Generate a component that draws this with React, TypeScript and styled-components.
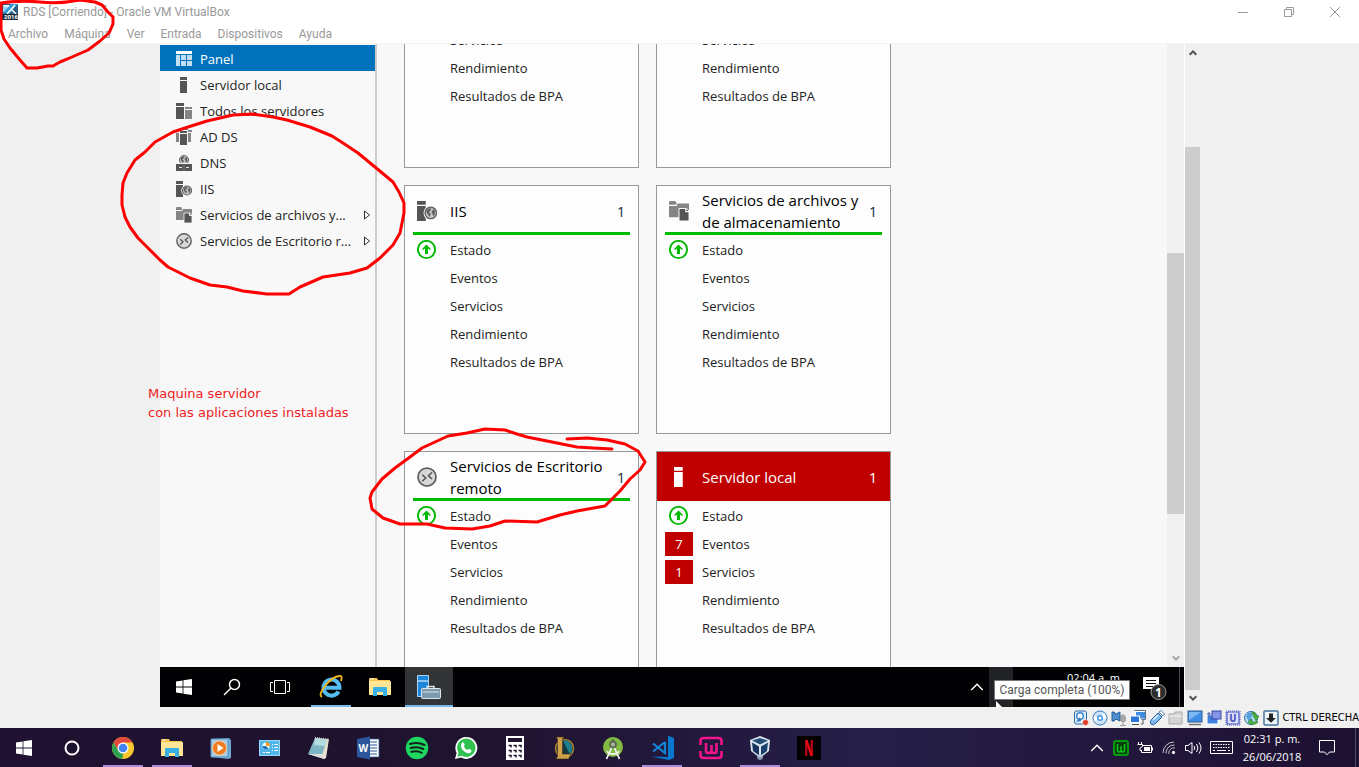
import React from "react";
import styled, { createGlobalStyle, css } from "styled-components";

const GlobalStyle = createGlobalStyle`
  * { box-sizing: border-box; }
  body { margin: 0; overflow: hidden; font-family: "Open Sans", "Noto Sans", sans-serif; font-size: 13px; color: #222; }
  button { font: inherit; color: inherit; border: 0; padding: 0; background: none; }
  h2, ul, p { margin: 0; padding: 0; font-weight: 400; }
  ul { list-style: none; }
  svg { display: block; flex: none; }
`;

/* ---------- Window frame ---------- */
const Desktop = styled.div`
  position: relative;
  display: flex;
  flex-direction: column;
  height: 100vh;
  background: #f0f0f0;
`;
const TitleBar = styled.header`
  display: flex;
  align-items: center;
  height: 24px;
  padding: 0 1px 0 2px;
  background: #fff;
  color: #999;
  font-family: Roboto, sans-serif;
  font-size: 12px;
`;
const WindowTitle = styled.span`
  flex: 1;
  margin-left: 5px;
`;
const WindowButton = styled.button`
  display: grid;
  place-items: center;
  width: 46px;
  height: 20px;
`;
const MenuBar = styled.nav`
  display: flex;
  align-items: center;
  gap: 16px;
  height: 19px;
  padding-left: 8px;
  background: #fff;
  color: #999;
  font-family: Roboto, sans-serif;
  font-size: 12px;
`;
const Workspace = styled.main`
  flex: 1;
  min-height: 0;
  display: grid;
  grid-template-columns: 160px minmax(0, 1fr) 16px 159px;
  grid-template-rows: minmax(0, 1fr);
  border-top: 1px solid #f4f4f4;
`;
const Guest = styled.section`
  grid-column: 2;
  display: flex;
  flex-direction: column;
  min-height: 0;
`;
const GuestScreen = styled.div`
  flex: 1;
  min-height: 0;
  display: flex;
  overflow: hidden;
  background: #f8f8f8;
`;
const ScrollTrack = styled.div<{ $before: number; $thumb: number; $after: number; $outer?: boolean }>`
  display: grid;
  grid-template-rows: ${(p) => `minmax(0, ${p.$before}fr) minmax(0, ${p.$thumb}fr) minmax(0, ${p.$after}fr)`};
  width: ${(p) => (p.$outer ? 16 : 17)}px;
  justify-items: center;
  background: #f0f0f0;
  border-left: ${(p) => (p.$outer ? "1px solid #fff" : "0")};
`;
const ScrollThumb = styled.div`
  width: 100%;
  background: #cdcdcd;
`;
const ScrollEnd = styled.span<{ $end?: boolean }>`
  align-self: ${(p) => (p.$end ? "end" : "start")};
  padding: 5px 0;
`;

/* ---------- Sidebar ---------- */
const Sidebar = styled.nav`
  width: 217px;
  padding-top: 1px;
  border-right: 2px solid #ccc;
`;
const NavItem = styled.a<{ $active?: boolean }>`
  display: flex;
  align-items: center;
  gap: 8px;
  height: 26px;
  padding: 1px 4px 0 16px;
  color: #222;
  font-size: 13px;
  text-decoration: none;
  white-space: nowrap;
  ${(p) => p.$active && css`background: #0072bc; color: #fff;`}
`;
const NavLabel = styled.span`
  flex: 1;
`;

/* ---------- Cards ---------- */
const Dashboard = styled.div`
  flex: 1;
  overflow: hidden;
`;
const CardGrid = styled.div`
  display: grid;
  grid-template-columns: repeat(2, 235px);
  grid-template-rows: 143px;
  grid-auto-rows: 249px;
  gap: 17px;
  margin: -19px 0 0 27px;
`;
const Card = styled.article`
  border: 1px solid #999;
  background: #fdfdfd;
`;
const CardHeader = styled.header<{ $alert?: boolean }>`
  display: grid;
  grid-template-columns: 28px minmax(0, 1fr) 18px;
  column-gap: 9px;
  align-items: center;
  height: 49px;
  margin: 0 8px 1px;
  color: #000;
  box-shadow: inset 0 -3px #00bc00;
  ${(p) => p.$alert && css`margin: 0 0 1px; padding: 0 8px; background: #c00000; color: #fff; box-shadow: none;`}
`;
const CardTitle = styled.h2`
  font-size: 15px;
  line-height: 22px;
  white-space: nowrap;
`;
const Count = styled.span<{ $alert?: boolean }>`
  color: ${(p) => (p.$alert ? "#fff" : "#16324a")};
  font-size: 15px;
  text-align: center;
`;
const IconSlot = styled.span`
  display: grid;
  place-items: center;
`;
const Row = styled.li`
  display: grid;
  grid-template-columns: 28px 1fr;
  column-gap: 9px;
  align-items: center;
  height: 28px;
  margin-left: 8px;
  font-size: 13px;
`;
const Badge = styled.span`
  display: grid;
  place-items: center;
  width: 28px;
  height: 24px;
  background: #c00000;
  color: #fff;
  font-size: 13px;
`;

/* ---------- Taskbars ---------- */
const GuestTaskbar = styled.footer`
  position: relative;
  display: flex;
  height: 40px;
  background: #010104;
  color: #fff;
`;
const Spacer = styled.span<{ $width?: number }>`
  flex: ${(p) => (p.$width ? `0 0 ${p.$width}px` : "1")};
`;
const Pinned = styled.div`
  display: flex;
  gap: 1px;
  margin-left: 3px;
`;
const TaskButton = styled.button<{ $line?: string; $active?: boolean }>`
  position: relative;
  display: grid;
  place-items: center;
  width: 48px;
  height: 100%;
  background: ${(p) => (p.$active ? "#333436" : "transparent")};
  ${(p) => p.$line && css`
    &::after {
      content: "";
      position: absolute;
      bottom: 0;
      left: ${p.$active ? 0 : 4}px;
      right: ${p.$active ? 0 : 4}px;
      height: 2px;
      background: ${p.$line};
    }
  `}
`;
const TrayButton = styled.button<{ $width: number; $lit?: boolean }>`
  display: grid;
  place-items: center;
  width: ${(p) => p.$width}px;
  height: 100%;
  background: ${(p) => (p.$lit ? "#222326" : "transparent")};
`;
const Clock = styled.time<{ $width: number }>`
  display: flex;
  flex-direction: column;
  align-items: center;
  justify-content: center;
  width: ${(p) => p.$width}px;
  font-size: 11px;
  line-height: 18px;
  white-space: nowrap;
`;
const ShowDesktop = styled.button<{ $width: number }>`
  width: ${(p) => p.$width}px;
  border-left: 1px solid #4c4a5c;
`;
const Tooltip = styled.div`
  position: absolute;
  right: 54px;
  top: 13px;
  width: 136px;
  height: 20px;
  border: 1px solid #767676;
  background: #fff;
  color: #555;
  font-family: Roboto, sans-serif;
  font-size: 12px;
  line-height: 18px;
  text-align: center;
  white-space: nowrap;
`;
const Pointer = styled.svg`
  position: absolute;
  right: 180px;
  top: 34px;
`;
const StatusBar = styled.footer`
  display: flex;
  align-items: center;
  justify-content: flex-end;
  gap: 3px;
  height: 21px;
  color: #000;
  font-family: "DejaVu Sans Condensed", "Liberation Sans", sans-serif;
  font-size: 11px;
  white-space: nowrap;
`;
const HostTaskbar = styled.footer`
  display: flex;
  height: 39px;
  background: linear-gradient(90deg, #1f1231 0%, #20132f 35%, #231a40 55%, #252049 64%, #24193f 78%, #1c1131 100%);
  color: #fff;
`;

/* ---------- Hand-drawn notes ---------- */
const Ink = styled.svg`
  position: absolute;
  inset: 0;
  width: 100%;
  height: 100%;
  pointer-events: none;
  fill: none;
  stroke: #fe0000;
  stroke-width: 3;
  stroke-linejoin: round;
  stroke-linecap: round;
`;
const Note = styled.p`
  position: absolute;
  left: 148px;
  top: 384px;
  color: #ee1c24;
  font-family: "DejaVu Sans", sans-serif;
  font-size: 13px;
  line-height: 19px;
`;

/* ---------- Icons ---------- */
const Chevron = ({ down, color = "#505050", w = 8 }: { down?: boolean; color?: string; w?: number }) => (
  <svg width={w} height={w} viewBox="0 0 8 8" fill="none" stroke={color} strokeWidth={w > 10 ? 0.8 : 2}>
    <path d={down ? "M.7 2.3 4 5.6 7.3 2.3" : "M.7 5.7 4 2.4 7.3 5.7"} />
  </svg>
);

const Globe = ({ x, y, r }: { x: number; y: number; r: number }) => (
  <g transform={`translate(${x} ${y}) scale(${r / 5})`}>
    <circle r="5" fill="#c4c4c4" stroke="#5c5c5c" strokeWidth="1.1" />
    <path d="M-3.9-1.6-2.2-3.6-.2-4 .6-2.8-.6-2-1-1-2-.6-1.2.2 0 .8-.4 2-1.4 3.6-2 1.6-3.4.4ZM1.6-3.4 3.2-2.6 4-1 3-.8 3.8.6 2.6 2.8 1.6 1.8 1.8.6.8-.4 1-1.6 2-2Z" fill="#5c5c5c" />
  </g>
);

type Kind = "panel" | "server" | "servers" | "adds" | "dns" | "iis" | "files" | "rds";
const RoleIcon = ({ kind, size = 16, color = "#555" }: { kind: Kind; size?: number; color?: string }) => (
  <svg width={size} height={size} viewBox="0 0 16 16">
    {kind === "panel" && (
      <>
        <path d="M0 0h16v3H0Z" fill="#fff" />
        <path d="M0 4h4v11H0ZM5 4h5v5H5ZM11 4h5v5h-5ZM5 10h5v5H5ZM11 10h5v5h-5Z" fill="#c4dff1" />
      </>
    )}
    {kind === "server" && <path d="M4 0h7v3H4ZM4 4h7v12H4Z" fill={color} />}
    {kind === "servers" && (
      <>
        <path d="M0 0h8v3H0ZM0 4h8v12H0Z" fill="#555" />
        <path d="M9 4h7v2H9ZM9 7h7v9H9Z" fill="#858585" />
      </>
    )}
    {kind === "adds" && (
      <>
        <path d="M0 1h3v2H0ZM0 4h3v9H0ZM12 1h4v2h-4ZM12 4h3v9h-3ZM5 0h7v1H5Z" fill="#858585" />
        <path d="M4 2h7v2H4ZM4 5h7v11H4Z" fill="#555" />
      </>
    )}
    {kind === "dns" && (
      <>
        <Globe x={8} y={5} r={4.5} />
        <path d="M0 9h16v7H0Z" fill="#555" />
        <path d="M0 8.500h16" stroke="#f8f8f8" />
        <path d="M3 12.500h3M10 12.500h3" stroke="#e8e8e8" />
        <path d="M8 10v6" stroke="#999" strokeWidth=".5" />
      </>
    )}
    {kind === "iis" && (
      <>
        <path d="M0 0h7v3H0ZM0 4h7v12H0Z" fill="#555" />
        <circle cx="11" cy="9.5" r="5.8" fill="#fafafa" />
        <Globe x={11} y={9.5} r={4.6} />
      </>
    )}
    {kind === "files" && (
      <>
        <path d="M0 1q0-1 1-1h4l1 1.5V3H0ZM0 4h6l1-2h9v11H0Z" fill="#858585" />
        <path d="M8 6h6l2 2v8H8Z" fill="#555" stroke="#fafafa" strokeWidth=".8" />
        <path d="M13.5 6v2.5H16" fill="none" stroke="#fafafa" />
      </>
    )}
    {kind === "rds" && (
      <>
        <circle cx="8" cy="8" r="7.2" fill="#d8d8d8" stroke="#606060" strokeWidth="1.4" />
        <path d="m4.2 6.2 2.8 2.6-2.8 2.6M12 4.400 9.200 7l2.800 2.600" fill="none" stroke="#555" strokeWidth="1.3" />
      </>
    )}
  </svg>
);

const UpIcon = () => (
  <svg width="20" height="20" viewBox="0 0 20 20">
    <circle cx="9.5" cy="9.500" r="8.600" fill="#fff" stroke="#00b900" strokeWidth="1.900" />
    <path d="m9.500 4.500 4 4v1.800L11 8.600V14H8V8.600l-2.500 1.700V8.500Z" fill="#00b900" />
  </svg>
);

const WindowsLogo = () => (
  <svg width="16" height="16" viewBox="0 0 16 16" fill="#fff">
    <path d="M0 2.4 6.6 1.4v6.1H0ZM7.4 1.2 16 0v7.5H7.4ZM0 8.4h6.6v6.2L0 13.6ZM7.4 8.4H16V16l-8.6-1.3Z" />
  </svg>
);
const FolderIcon = () => (
  <svg width="22" height="20" viewBox="0 0 22 20">
    <path d="M0 2q0-1 1-1h7l1 2h12v15H0Z" fill="#f3c64e" />
    <path d="M1 4h20q1 0 1 1v13H0V5q0-1 1-1Z" fill="#ffe595" />
    <path d="M1.5 2h3" stroke="#fff" />
    <path d="M4 19v-8q0-1 1-1h12q1 0 1 1v8h-4v-4H8v4Z" fill="#38b0e6" />
  </svg>
);

const StatusIcon = ({ kind }: { kind: number }) => (
  <svg width="16" height="16" viewBox="0 0 16 16">
    {kind === 0 && (<>
      <rect x="1.5" y="1" width="12" height="13" rx="2" fill="#dceefb" stroke="#2c6cab" />
      <circle cx="7" cy="6" r="3.3" fill="#fff" stroke="#3d8ad1" strokeWidth="1.5" /><path d="m7 7-4 5 5-1Z" fill="#2f77c2" />
      <circle cx="12.5" cy="12.5" r="3" fill="#e03a26" stroke="#fff" strokeWidth=".6" />
    </>)}
    {kind === 1 && (<>
      <circle cx="8" cy="8" r="7" fill="#cce5fa" stroke="#3a79ba" />
      <path d="m8 8 4-5q3 3 2 6ZM8 8 3 12q-2-3-1-6Z" fill="#fff" /><circle cx="8" cy="8" r="2.3" fill="#fff" stroke="#4a97dd" strokeWidth="1.5" />
    </>)}
    {kind === 2 && (<>
      <path d="M1 2h2l2 2 4-2v9L5 9l-2 2H1Z" fill="#4d8fce" stroke="#245a92" />
      <rect x="10" y="5" width="4" height="7" rx="2" fill="#bbb" stroke="#8b8b8b" /><path d="M9 8h6M9 10h6M12 13v2.500M9 15.500h6" stroke="#999" />
    </>)}
    {kind === 3 && (<>
      <rect x="5.500" y="1.500" width="10" height="7.500" fill="#3e8de0" stroke="#fff" /><path d="M4.500.5h11v9h-4" fill="none" stroke="#5c6f85" />
      <rect x=".5" y="6" width="9" height="6.500" fill="#2972d8" stroke="#fff" /><path d="M2 14.500h7M13 10v4h-2" stroke="#555" fill="none" />
    </>)}
    {kind === 4 && (<>
      <path d="m3 9 6-6 4 4-6 6q-3 3-5 1t1-5Z" fill="#80b9ef" stroke="#245f9f" /><path d="m10 2 2-1.500 3.500 3.500L14 6Z" fill="#fff" stroke="#4a7dab" /><path d="m4 10 5-5" stroke="#e8f5ff" strokeWidth="1.500" />
    </>)}
    {kind === 5 && (<>
      <path d="M1 14V4h5l1-2h7v12Z" fill="#d4d4d4" stroke="#a9a9a9" /><path d="M1 6h13" stroke="#f4f4f4" />
    </>)}
    {kind === 6 && (<>
      <rect x="1" y="1" width="14" height="11" fill="#3f8ee4" stroke="#2e5d92" /><path d="M2 2h12L2 10Z" fill="#7fb9f4" /><path d="M2 14.500h12" stroke="#777" strokeWidth="1.500" />
    </>)}
    {kind === 7 && (<>
      <rect x="1" y="5" width="11" height="9" fill="#3f83df" stroke="#fff" /><rect x="6" y="1" width="9" height="8" fill="#8595e8" stroke="#3446aa" /><path d="M3 2v5M1 4h4" stroke="#4552a8" />
    </>)}
    {kind === 8 && (<>
      <rect x="2" y="2" width="12" height="12" rx="1" fill="#dde1fb" stroke="#4a56be" strokeWidth="1.200" /><rect x="1" y="1" width="14" height="14" fill="none" stroke="#4a56be" strokeDasharray="1 1" />
      <text x="8" y="12" fontSize="10" fontWeight="700" textAnchor="middle" fill="#4a56be">U</text>
    </>)}
    {kind === 9 && (<>
      <circle cx="7" cy="8" r="6.500" fill="#b9ddf4" stroke="#2f6da8" /><path d="m2 6 3-4 4 2-2 4 2 4-3 2Z" fill="#55a1da" />
      <path d="M8 2q4 0 4.500 4H15l-3 4.500L9 6h1.500Q10 4 8 4ZM7 14q5 1 7-2l-2-1q-2 2-4 1V9l-4 3 3 3Z" fill="#4fbd3a" stroke="#20722c" strokeWidth=".6" />
    </>)}
    {kind === 10 && (<>
      <rect x="1" y="1" width="14" height="14" rx="1" fill="#edf5fb" stroke="#44739e" strokeWidth="1.500" /><path d="M6 3.500h4V8h3L8 12.800 3 8h3Z" fill="#222" />
    </>)}
  </svg>
);

const HostIcon = ({ name }: { name: string }) => (
  <svg width="24" height="24" viewBox="0 0 24 24">
    {name === "Chrome" && (<>
      <circle cx="12" cy="12" r="11" fill="#f8c92c" />
      <path d="M2.500 6.500A11 11 0 0 1 21.500 6.500H12L7.200 14.700Z" fill="#e2483b" />
      <path d="M2.500 6.500 7.300 14.700 12 17.300 11.500 23A11 11 0 0 1 2.500 6.500Z" fill="#2fa24f" />
      <circle cx="12" cy="12" r="5.500" fill="#fff" /><circle cx="12" cy="12" r="4.300" fill="#4284f3" />
    </>)}
    {name === "Media Player" && (<>
      <path d="M2 3 20 2l2 2v18l-3 1-17-2Z" fill="#6faad2" /><path d="M2 3h17v18H2Z" fill="#a8cfe8" stroke="#5791ba" />
      <circle cx="10.500" cy="12" r="7" fill="#ef7b1e" stroke="#ffc58f" /><path d="m8.500 8 6 4-6 4Z" fill="#fff" />
    </>)}
    {name === "Panel de control" && (<>
      <rect x="1.500" y="4.500" width="20" height="15" fill="#52b6eb" stroke="#9ad7f5" />
      <circle cx="8" cy="10" r="3.500" fill="#fff" /><path d="M8 10V6a4 4 0 0 1 4 4Z" fill="#f59b21" /><path d="M8 10H4.500a3.500 3.500 0 0 0 6 2.500Z" fill="#1d73b8" />
      <path d="M14 8.500h1m1.500 0H20M14 11.500h1m1.500 0H20M14 14.500h1m1.500 0H20M5 16.500h2m1 0h4" stroke="#fff" />
    </>)}
    {name === "Bloc de notas" && (<>
      <path d="m8 2 14 1-3 19-2 1-3-1Z" fill="#e6e2cf" /><path d="m8 2 12 2-6 18L1 18Z" fill="#7eb5c4" /><path d="m8 2 12 2-2 6-11-1Z" fill="#b5dce2" /><path d="m1 18 13 4 4 1-3-5" fill="#ddd" /><path d="m8 1.500 13 2" stroke="#ccc" strokeDasharray="1 1" strokeWidth="1.500" />
    </>)}
    {name === "Word" && (<>
      <path d="M12 3h11v18H12Z" fill="#fff" stroke="#2b579a" strokeWidth=".7" /><path d="M14 6h7M14 9h7M14 12h7M14 15h7M14 18h7" stroke="#2b579a" />
      <path d="m1 3 13-2.500v23L1 21Z" fill="#2b579a" /><text x="7.300" y="16" fontSize="10" fontWeight="700" textAnchor="middle" fill="#fff">W</text>
    </>)}
    {name === "Spotify" && (<>
      <circle cx="12" cy="12" r="11.200" fill="#1ed760" /><path d="M5 8q8-2.500 14.500 1M5.700 12q7-2 12.500 1M6.400 15.800q6-1.500 10.400 1" fill="none" stroke="#132218" strokeWidth="2" strokeLinecap="round" />
    </>)}
    {name === "WhatsApp" && (<>
      <path d="m1 23 1.600-6A11 11 0 1 1 7 21.500Z" fill="#fff" /><path d="m3.300 20.800 1.200-4.200A9.200 9.200 0 1 1 7.700 19.700Z" fill="#2fc251" />
      <path d="M8 6.500q1-.8 1.700.2l1 2q0 .8-1 1.500 1.200 2.800 4 3.800 1-1.500 1.700-1l2 1.200q.5 2.500-2.700 3-3.400 0-6.500-3.600Q5.700 9 8 6.500Z" fill="#fff" />
    </>)}
    {name === "Calculadora" && (<>
      <path d="M3 0h18v24H3Z" fill="#fff" /><path d="M5 2h14v4H5Z" fill="#20142f" />
      <path d="M5.500 9.500h2.500v2M10.500 9.500H13v2M15.500 9.500H18v2M5.500 14.500h2.500v2M10.500 14.500H13v2M15.500 14.500H18v2M5.500 19.500h2.500v2M10.500 19.500H13v2M15.500 19.500H18v2" fill="none" stroke="#20142f" strokeWidth="1.500" />
    </>)}
    {name === "League of Legends" && (<>
      <circle cx="12.500" cy="12.500" r="9" fill="#143942" stroke="#a57a32" strokeWidth="1.600" /><path d="M11 4.500a8 8 0 0 1 9 9q0 3-2 5Z" fill="#1e8190" />
      <path d="M4 1h8l-1.500 2v15H19l-2.500 5H4l1.500-2.500V3Z" fill="#cfa14b" stroke="#3b2b12" strokeWidth=".6" />
    </>)}
    {name === "Android Studio" && (<>
      <circle cx="12" cy="11" r="10" fill="#83bb42" /><circle cx="12" cy="8.500" r="3" fill="#a9b5a0" stroke="#5a6b50" strokeWidth="1.800" /><path d="M12 3v3" stroke="#5a6b50" strokeWidth="2" />
      <path d="m10.500 12-5 11M13.500 12l5 11M6 15q1 3 6 3t6-3" fill="none" stroke="#f0f0f0" strokeWidth="1.800" />
    </>)}
    {name === "VS Code" && (<>
      <path d="M18 0h1l5 2v20l-5 2L1 20.500 18 21Z" fill="#0878cf" /><path d="M15 6v11L3 7.500M15 6 3 15.500" fill="none" stroke="#1284d8" strokeWidth="2.200" />
    </>)}
    {name === "WampServer" && (
      <path d="M1.500 9V5q0-3 3-3h15q3 0 3 3v4M1.500 15v4q0 3 3 3h15q3 0 3-3v-4M7 7v8q0 2 2.500 2t3-2V9v6q0 2 2.500 2t2.500-2V7" fill="none" stroke="#f3148c" strokeWidth="2.600" />
    )}
    {name === "VirtualBox" && (<>
      <path d="m12 0 10 4-1 11-9 7-9-7L2 4Z" fill="#dce8f0" /><path d="m12 2 8 2.500-8 4-8-4Z" fill="#244d77" /><path d="m4 6.500 7 4v9L5 15Z" fill="#17355c" /><path d="m20 6.500-7 4v9l6-4.500Z" fill="#1b426e" /><circle cx="12" cy="21" r="3" fill="#a9bfd0" opacity=".7" />
    </>)}
    {name === "Netflix" && (<>
      <path d="M0 0h24v24H0Z" fill="#000" /><path d="M9.200 4v16M14.800 4v16" stroke="#b1060f" strokeWidth="2.400" /><path d="M8 4h2.600L16 20h-2.600Z" fill="#e50914" />
    </>)}
  </svg>
);

/* ---------- Data ---------- */
const navItems: { kind: Kind; label: string; more?: boolean }[] = [
  { kind: "panel", label: "Panel" },
  { kind: "server", label: "Servidor local" },
  { kind: "servers", label: "Todos los servidores" },
  { kind: "adds", label: "AD DS" },
  { kind: "dns", label: "DNS" },
  { kind: "iis", label: "IIS" },
  { kind: "files", label: "Servicios de archivos y...", more: true },
  { kind: "rds", label: "Servicios de Escritorio r...", more: true },
];
type CardData = { kind: Kind; lines: string[]; alert?: boolean; badges?: Record<string, number> };
const cards: CardData[] = [
  { kind: "iis", lines: ["IIS"] },
  { kind: "files", lines: ["Servicios de archivos y", "de almacenamiento"] },
  { kind: "rds", lines: ["Servicios de Escritorio", "remoto"] },
  { kind: "server", lines: ["Servidor local"], alert: true, badges: { Eventos: 7, Servicios: 1 } },
];
const metrics = ["Estado", "Eventos", "Servicios", "Rendimiento", "Resultados de BPA"];
const hostApps = ["Chrome", "Explorador", "Media Player", "Panel de control", "Bloc de notas", "Word", "Spotify", "WhatsApp", "Calculadora", "League of Legends", "Android Studio", "VS Code", "WampServer", "VirtualBox", "Netflix"];
const running = ["Chrome", "Explorador", "VS Code", "VirtualBox"];

const MetricList = ({ items, badges = {} }: { items: string[]; badges?: Record<string, number> }) => (
  <ul>
    {items.map((m) => (
      <Row key={m}>
        <IconSlot>{m === "Estado" ? <UpIcon /> : badges[m] && <Badge>{badges[m]}</Badge>}</IconSlot>
        <span>{m}</span>
      </Row>
    ))}
  </ul>
);

const RoleCard = ({ kind, lines, alert, badges }: CardData) => (
  <Card>
    <CardHeader $alert={alert}>
      <IconSlot><RoleIcon kind={kind} size={20} color={alert ? "#fff" : "#555"} /></IconSlot>
      <CardTitle>{lines.map((l, i) => <React.Fragment key={l}>{i > 0 && <br />}{l}</React.Fragment>)}</CardTitle>
      <Count $alert={alert}>1</Count>
    </CardHeader>
    <MetricList items={metrics} badges={badges} />
  </Card>
);

export default function App() {
  return (
    <Desktop>
      <GlobalStyle />
      <TitleBar>
        <svg width="16" height="16" viewBox="0 0 16 16">
          <path d="M0 0h16v16H0Z" fill="#315a7c" /><path d="M1 1h7v7H1Z" fill="#9bd3f2" /><path d="M9 0h7L8 9H1Z" fill="#2b9ce0" /><path d="M2 2h5M13 1 5 10M9 5l5 5" stroke="#fff" strokeWidth="1.500" /><path d="M0 10h16v6H0Z" fill="#1c2c40" />
          <text x="9" y="15" fontSize="6" fontWeight="700" textAnchor="middle" fill="#fff">2016</text>
        </svg>
        <WindowTitle>RDS [Corriendo] - Oracle VM VirtualBox</WindowTitle>
        <WindowButton aria-label="Minimizar"><svg width="10" height="10" stroke="#999"><path d="M0 5.500h10" /></svg></WindowButton>
        <WindowButton aria-label="Restaurar"><svg width="10" height="10" fill="none" stroke="#999"><path d="M.5 2.500h7v7h-7ZM2.500 2.500v-2h7v7h-2" /></svg></WindowButton>
        <WindowButton aria-label="Cerrar"><svg width="10" height="10" stroke="#999"><path d="m0 0 10 10M10 0 0 10" /></svg></WindowButton>
      </TitleBar>
      <MenuBar>
        {["Archivo", "Máquina", "Ver", "Entrada", "Dispositivos", "Ayuda"].map((m) => <button key={m}>{m}</button>)}
      </MenuBar>

      <Workspace>
        <Guest>
          <GuestScreen>
            <Sidebar>
              {navItems.map((n) => (
                <NavItem key={n.label} href="#" $active={n.kind === "panel"}>
                  <RoleIcon kind={n.kind} />
                  <NavLabel>{n.label}</NavLabel>
                  {n.more && <svg width="8" height="10" viewBox="0 0 8 10" fill="#fff" stroke="#333"><path d="M1.500 1v8L6.500 5Z" /></svg>}
                </NavItem>
              ))}
            </Sidebar>
            <Dashboard>
              <CardGrid>
                <Card><MetricList items={metrics.slice(2)} /></Card>
                <Card><MetricList items={metrics.slice(2)} /></Card>
                {cards.map((c) => <RoleCard key={c.lines[0]} {...c} />)}
              </CardGrid>
            </Dashboard>
            <ScrollTrack $before={209} $thumb={261} $after={153}>
              <span />
              <ScrollThumb />
              <ScrollEnd $end><Chevron down color="#a6a6a6" /></ScrollEnd>
            </ScrollTrack>
          </GuestScreen>
          <GuestTaskbar>
            <TaskButton aria-label="Inicio"><WindowsLogo /></TaskButton>
            <TaskButton aria-label="Buscar">
              <svg width="18" height="18" fill="none" stroke="#fff" strokeWidth="1.500"><circle cx="11.500" cy="6.500" r="5" /><path d="m8 10-7 7" /></svg>
            </TaskButton>
            <TaskButton aria-label="Vista de tareas">
              <svg width="20" height="14" fill="none" stroke="#fff"><path d="M4.500.5h11v13h-11ZM3 2.500H.500v9H3M17 2.500h2.500v9H17" /></svg>
            </TaskButton>
            <Pinned>
              <TaskButton $line="#76b9ed" aria-label="Internet Explorer">
                <svg width="24" height="24" viewBox="0 0 24 24" fill="none">
                  <path d="M19.500 16.500A8 8 0 1 1 20.500 12.800H6.500" stroke="#55bdf2" strokeWidth="4" />
                  <path d="M3 22Q-1 20 6 11T20 1q4-1 2 5" stroke="#efb71d" strokeWidth="1.800" />
                </svg>
              </TaskButton>
              <TaskButton aria-label="Explorador de archivos"><FolderIcon /></TaskButton>
              <TaskButton $line="#76b9ed" $active aria-label="Administrador del servidor">
                <svg width="24" height="24" viewBox="0 0 24 24">
                  <path d="M.5.5h11v21H.5Z" fill="#1e86d8" stroke="#a9d2f2" /><path d="M1 6h10" stroke="#fff" />
                  <path d="M10 13v-1.500h7V13" fill="none" stroke="#d7e2e9" strokeWidth="1.500" />
                  <rect x="4.500" y="13.500" width="19" height="10" rx="1" fill="#7c9bae" stroke="#dbe6ed" /><path d="M6 17h16" stroke="#dbe6ed" />
                </svg>
              </TaskButton>
            </Pinned>
            <Spacer />
            <TrayButton $width={24} aria-label="Iconos ocultos"><Chevron color="#fff" w={14} /></TrayButton>
            <TrayButton $width={24} $lit aria-label="Batería" />
            <Spacer $width={46} />
            <Clock $width={72}><span>02:04 a. m.</span><span>26/06/2018</span></Clock>
            <Tooltip role="tooltip">Carga completa (100%)</Tooltip>
            <Pointer width="9" height="6" viewBox="0 0 9 6"><path d="M1 0v6h6Z" fill="#fff" /></Pointer>
            <TrayButton $width={48} aria-label="Notificaciones">
              <svg width="24" height="26" viewBox="0 0 24 26">
                <path d="M0 3h16v12h-5l-3 3v-3H0Z" fill="#fff" /><path d="M3 6.500h10M3 9.500h10M3 12.500h7" stroke="#111" />
                <circle cx="15.500" cy="18" r="7.500" fill="#2d2d2d" stroke="#999" /><text x="15.500" y="22.500" fontSize="12" fontWeight="700" textAnchor="middle" fill="#fff">1</text>
              </svg>
            </TrayButton>
            <ShowDesktop $width={5} aria-label="Mostrar escritorio" />
          </GuestTaskbar>
        </Guest>
        <ScrollTrack $outer $before={103} $thumb={543} $after={17}>
          <ScrollEnd><Chevron /></ScrollEnd>
          <ScrollThumb />
          <ScrollEnd $end><Chevron down /></ScrollEnd>
        </ScrollTrack>
      </Workspace>

      <StatusBar>
        {Array.from({ length: 11 }, (_, i) => <StatusIcon key={i} kind={i} />)}
        <span>CTRL DERECHA</span>
      </StatusBar>

      <HostTaskbar>
        <TaskButton aria-label="Inicio"><WindowsLogo /></TaskButton>
        <TaskButton aria-label="Cortana"><svg width="16" height="16"><circle cx="8" cy="8" r="6.500" fill="none" stroke="#fff" strokeWidth="2" /></svg></TaskButton>
        <Pinned>
          {hostApps.map((a) => (
            <TaskButton key={a} aria-label={a} $line={running.includes(a) ? "#a98bdc" : undefined}>
              {a === "Explorador" ? <FolderIcon /> : <HostIcon name={a} />}
            </TaskButton>
          ))}
        </Pinned>
        <Spacer />
        <TrayButton $width={24} aria-label="Iconos ocultos"><Chevron color="#fff" w={14} /></TrayButton>
        <TrayButton $width={24} aria-label="WampServer">
          <svg width="16" height="16" viewBox="0 0 16 16" fill="none"><rect x="1" y="1" width="14" height="14" rx="2" fill="#063f0a" stroke="#079b10" strokeWidth="2" /><path d="M4.500 4v6q0 2 1.800 2T8 10V6v4q0 2 1.800 2t1.700-2V4" stroke="#12c91c" strokeWidth="1.500" /></svg>
        </TrayButton>
        <TrayButton $width={24} aria-label="Batería">
          <svg width="16" height="12" fill="none" stroke="#fff"><path d="M6 3.500h8.500v7h-10V8M15.500 5.500v3M1.500 0v2M4.500 0v2M.5 2.500h5v2L3 6V8.500h1.500" /><path d="M7 5h6v4H7Z" fill="#fff" stroke="none" /></svg>
        </TrayButton>
        <TrayButton $width={24} aria-label="Red">
          <svg width="14" height="14" fill="none" stroke="#fff"><g opacity=".75"><path d="M1 12A11 11 0 0 1 12 1M4 12.500A8 8 0 0 1 12.500 4M7 13A5 5 0 0 1 13 7" /></g><circle cx="11.500" cy="11.500" r="1.200" fill="#fff" /></svg>
        </TrayButton>
        <TrayButton $width={24} aria-label="Volumen">
          <svg width="17" height="14" fill="none" stroke="#fff"><path d="M.5 4.500h2.500l4-3v11L3 9.500H.500ZM9 5q1.500 2 0 4M11.500 3q3 4 0 8M14 1.500q4 5.500 0 11" /></svg>
        </TrayButton>
        <TrayButton $width={32} aria-label="Teclado">
          <svg width="23" height="13" fill="none" stroke="#fff"><path d="M.5.5h22v12H.5Z" /><path d="M3 3.500h17M3 6.500h17" strokeDasharray="1.500 1" /><path d="M3 9.500h2M7 9.500h9M18 9.500h2" /></svg>
        </TrayButton>
        <Clock $width={70}><span>02:31 p. m.</span><span>26/06/2018</span></Clock>
        <TrayButton $width={40} aria-label="Notificaciones">
          <svg width="16" height="16" fill="none" stroke="#fff"><path d="M.5.5h15v11.500h-5L8 14.800 5.500 12h-5Z" /></svg>
        </TrayButton>
        <Spacer $width={8} />
        <ShowDesktop $width={4} aria-label="Mostrar escritorio" />
      </HostTaskbar>

      <Note>Maquina servidor<br />con las aplicaciones instaladas</Note>
      <Ink aria-hidden="true">
        <path d="M1 3Q20 0 40 2T80 0L95 2 102 5 108 12 113 17V24L109 33 100 41 88 50 72 57 60 62 53 66 48 66 37 68 27 68 20 60 10 48 4 39 1 30V3" />
        <path d="M253 114 233 115 207 121 188 127 173 132 155 142 145 152 135 160 127 173 123 183 122 195V205L125 217 130 227 138 238 147 247 160 260 168 267 190 278 210 285 227 287 243 291 267 294 289 294 300 287 323 277 350 273 367 268 380 258 393 245 400 233 404 213V203L399 192 393 182 375 167 358 153 343 143 332 136 310 127 287 120 273 117Z" />
        <path d="M567 439 587 438 607 440 625 444 638 451 645 462 640 470 630 479 620 491 605 506 577 511 560 515 537 522 505 521 490 526 472 529 445 528 427 524 400 524 383 518 372 509 370 498 372 492 382 479 395 468 410 457 422 448 448 436 467 433 485 429 505 430 517 434 527 437 547 441 577 447 593 448 612 449" />
      </Ink>
    </Desktop>
  );
}
